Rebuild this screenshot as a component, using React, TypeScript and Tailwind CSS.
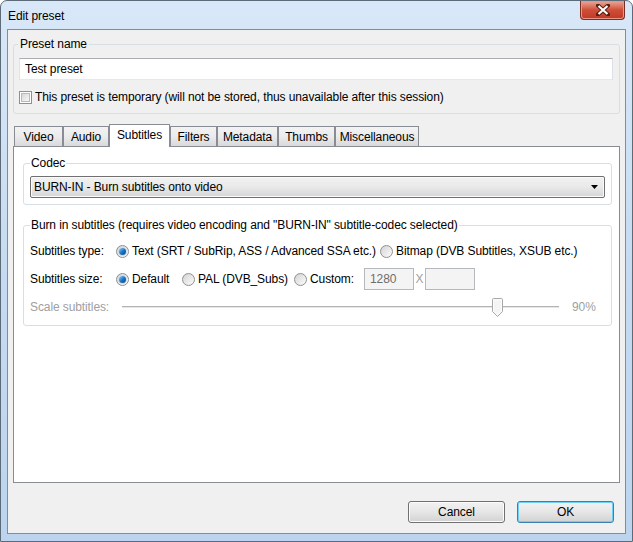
import React from "react";

const tabs = [
  { label: "Video", w: "w-[49px]" },
  { label: "Audio", w: "w-[46px]" },
  { label: "Subtitles", w: "w-[61px]", active: true },
  { label: "Filters", w: "w-[47px]" },
  { label: "Metadata", w: "w-[61px]" },
  { label: "Thumbs", w: "w-[57px]" },
  { label: "Miscellaneous", w: "w-[84px]" },
];

const Radio = ({ checked }: { checked?: boolean }) => (
  <span className="flex h-[13px] w-[13px] shrink-0 items-center justify-center rounded-full border border-[#8f8f8f] bg-gradient-to-br from-[#d4d4d4] to-[#fcfcfc]">
    {checked && (
      <span className="h-[7px] w-[7px] rounded-full bg-gradient-to-br from-[#8fd0f7] via-[#1d76c8] to-[#0b4585] shadow-[0_0_0_1px_#c6def2]" />
    )}
  </span>
);

const Checkbox = () => (
  <span className="flex h-[13px] w-[13px] shrink-0 items-center justify-center border border-[#8f8f8f] bg-white">
    <span className="h-[9px] w-[9px] border border-[#b9b9b9] bg-gradient-to-br from-[#d9d9d9] to-[#f7f7f7]" />
  </span>
);

const Button = ({ label, primary }: { label: string; primary?: boolean }) => (
  <button
    className={
      "flex h-[22px] w-[97px] items-center justify-center rounded-[3px] border bg-gradient-to-b from-[#f2f2f2] via-[#e6e6e6] to-[#d2d2d2] " +
      (primary
        ? "border-[#3c7fb1] shadow-[inset_0_0_0_1px_#6fd0f7]"
        : "border-[#707070] shadow-[inset_0_0_0_1px_#fcfcfc]")
    }
  >
    {label}
  </button>
);

export default function App() {
  return (
    <div className="flex h-[542px] w-[633px] flex-col whitespace-nowrap rounded-t-[7px] border border-[#5d6b79] bg-gradient-to-b from-[#d9e8f8] via-[#c6dbf1] to-[#bcd4ee] font-['Liberation_Sans',Arial,sans-serif] text-[12px] leading-[15px] tracking-[-0.1px] text-black">
      {/* caption */}
      <div className="flex h-[28px] shrink-0 items-start justify-between pl-[7px] pr-[7px]">
        <span className="mt-[8px] text-[12px]">Edit preset</span>
        <div className="flex h-[19px] w-[45px] items-center justify-center rounded-b-[4px] border border-t-0 border-[#7a2e23] bg-gradient-to-b from-[#e9a89a] via-[#cf4d37] to-[#c03a24] shadow-[inset_0_0_0_1px_#e8978a]">
          <svg width="14" height="12" viewBox="0 0 14 12">
            <path d="M2 1.5 L12 10.5 M12 1.5 L2 10.5" stroke="#5a1b12" strokeWidth="4" strokeLinecap="square" />
            <path d="M2.5 2 L11.5 10 M11.5 2 L2.5 10" stroke="#ffffff" strokeWidth="2.2" />
          </svg>
        </div>
      </div>

      {/* client area */}
      <div className="mx-[6px] mb-[7px] flex flex-1 flex-col border border-[#7f8e9d] bg-[#f0f0f0] px-[5px] pt-[7px] pb-[10px]">
        <fieldset className="rounded-[3px] border border-[#d5dfe5] pl-[5px] pr-[6px] pb-[8px]">
          <legend className="ml-[-1px] px-[2px]">Preset name</legend>
          <div className="mt-[6px] flex h-[22px] items-center border border-[#abadb3] border-b-[#e3e9ef] border-l-[#e2e3ea] border-r-[#dbdfe6] bg-white pl-[5px]">
            Test preset
          </div>
          <label className="mt-[10px] flex h-[15px] items-center gap-[3px]">
            <Checkbox />
            <span>This preset is temporary (will not be stored, thus unavailable after this session)</span>
          </label>
        </fieldset>

        {/* tab strip */}
        <div className="mt-[10px] flex items-end pl-[1px]">
          {tabs.map((t) =>
            t.active ? (
              <div
                key={t.label}
                className={`${t.w} relative z-10 -mb-[1px] flex h-[23px] items-start justify-center border border-b-0 border-[#898c95] bg-white pt-[3px]`}
              >
                {t.label}
              </div>
            ) : (
              <div
                key={t.label}
                className={`${t.w} flex h-[20px] items-center justify-center border border-b-0 border-[#898c95] bg-gradient-to-b from-[#f3f3f3] via-[#ebebeb] to-[#d9d9d9] pt-[1px]`}
              >
                {t.label}
              </div>
            )
          )}
        </div>

        {/* tab page */}
        <div className="flex-1 border border-[#898c95] bg-white pl-[9px] pr-[7px] pt-[9px]">
          <fieldset className="rounded-[3px] border border-[#d5dfe5] pl-[6px] pr-[6px] pb-[6px]">
            <legend className="px-[1px]">Codec</legend>
            <div className="mt-[5px] flex h-[22px] items-center justify-between rounded-[2px] border border-[#707070] bg-gradient-to-b from-[#f2f2f2] via-[#e9e9e9] to-[#d6d6d6] pl-[3px] pr-[5px] shadow-[inset_0_0_0_1px_#fafafa]">
              <span>BURN-IN - Burn subtitles onto video</span>
              <svg width="8" height="5" viewBox="0 0 8 5">
                <path d="M0 0 H7 L3.5 4 Z" fill="#000" />
              </svg>
            </div>
          </fieldset>

          <fieldset className="mt-[13px] rounded-[3px] border border-[#d5dfe5] pl-[6px] pr-[6px] pb-[7px]">
            <legend className="px-[1px]">
              Burn in subtitles (requires video encoding and "BURN-IN" subtitle-codec selected)
            </legend>

            <div className="mt-[7px] flex h-[22px] items-center">
              <span className="w-[86px] shrink-0">Subtitles type:</span>
              <label className="flex w-[264px] items-center gap-[3px]">
                <Radio checked />
                <span>Text (SRT / SubRip, ASS / Advanced SSA etc.)</span>
              </label>
              <label className="flex items-center gap-[3px]">
                <Radio />
                <span>Bitmap (DVB Subtitles, XSUB etc.)</span>
              </label>
            </div>

            <div className="mt-[6px] flex h-[22px] items-center">
              <span className="w-[86px] shrink-0">Subtitles size:</span>
              <label className="flex w-[66px] items-center gap-[3px]">
                <Radio checked />
                <span>Default</span>
              </label>
              <label className="flex w-[112px] items-center gap-[3px]">
                <Radio />
                <span>PAL (DVB_Subs)</span>
              </label>
              <label className="flex w-[70px] items-center gap-[3px]">
                <Radio />
                <span>Custom:</span>
              </label>
              <div className="flex h-[22px] w-[50px] items-center border border-[#b5b9bd] bg-[#f4f4f4] pl-[5px] text-[#6d6d6d]">
                1280
              </div>
              <span className="w-[11px] text-center text-[#a0a0a0]">X</span>
              <div className="h-[22px] w-[50px] border border-[#b5b9bd] bg-[#f4f4f4]" />
            </div>

            <div className="mt-[6px] flex h-[22px] items-center text-[#a0a0a0]">
              <span className="w-[92px] shrink-0">Scale subtitles:</span>
              {/* disabled trackbar */}
              <div className="relative h-[22px] w-[437px]">
                <div className="absolute left-0 right-0 top-[10px] h-[2px] border-t border-[#b4b4b4] border-b-[#ffffff] bg-[#e6e6e6]" />
                <svg className="absolute left-[370px] top-[2px]" width="11" height="19" viewBox="0 0 11 19">
                  <path d="M0.5 1.5 Q0.5 0.5 1.5 0.5 H9.5 Q10.5 0.5 10.5 1.5 V13.5 L5.5 18.5 L0.5 13.5 Z" fill="#f4f4f4" stroke="#a8a8a8" />
                  <path d="M1.5 2 H9.5 V13 L5.5 17 L1.5 13 Z" fill="none" stroke="#ffffff" strokeWidth="0.8" />
                </svg>
              </div>
              <span className="ml-[13px]">90%</span>
            </div>
          </fieldset>
        </div>

        {/* dialog buttons */}
        <div className="mt-[18px] flex justify-end gap-[12px] pr-[6px]">
          <Button label="Cancel" />
          <Button label="OK" primary />
        </div>
      </div>
    </div>
  );
}
